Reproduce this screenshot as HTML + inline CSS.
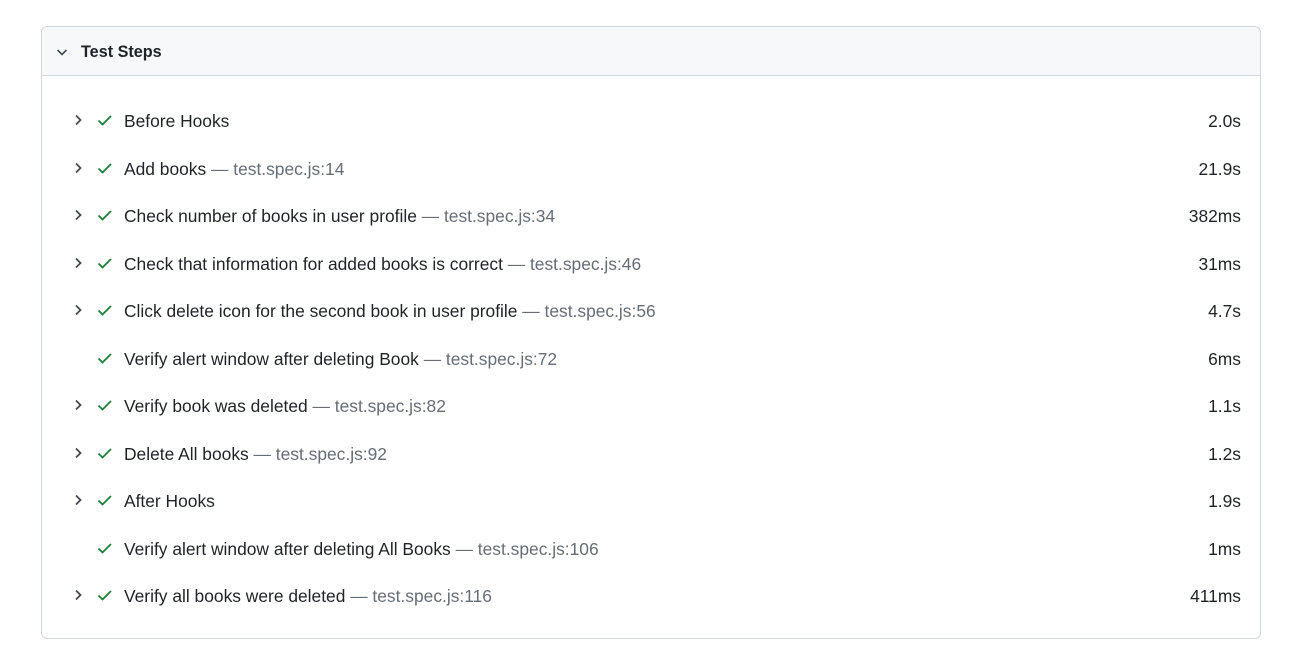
<!DOCTYPE html>
<html><head><style>
body{margin:0;background:#fff;font-family:"Liberation Sans",sans-serif;color:#1f2328;}
.box{position:absolute;left:41px;top:26px;width:1218px;height:611px;border:1px solid #d0d7de;border-radius:6px;overflow:hidden;}
.hd{height:48px;background:#f6f8fa;border-bottom:1px solid #d0d7de;position:relative;}
.hd span{position:absolute;left:39px;top:16px;font-size:16.2px;font-weight:bold;}
.hd svg{position:absolute;left:12px;top:17px;}
.row{position:absolute;left:0;width:1218px;height:24px;font-size:17.4px;}
.row .t{position:absolute;left:82px;top:2px;white-space:nowrap;}
.row .d{position:absolute;right:19px;top:2px;}
.row .c{position:absolute;left:28px;top:3px;}
.row .k{position:absolute;left:54px;top:3px;}
.s{color:#656d76;}
</style></head><body>
<div class="box">
<div class="hd"><svg width="16" height="16" viewBox="0 0 16 16"><path d="M3.5 6l4.5 4.5L12.5 6" fill="none" stroke="#424a53" stroke-width="1.6"/></svg><span>Test Steps</span></div>
</div>
<div id="rows" style="position:absolute;left:42px;top:0;"></div>
<script>
var d=[["Before Hooks","","2.0s",1],["Add books"," — test.spec.js:14","21.9s",1],["Check number of books in user profile"," — test.spec.js:34","382ms",1],["Check that information for added books is correct"," — test.spec.js:46","31ms",1],["Click delete icon for the second book in user profile"," — test.spec.js:56","4.7s",1],["Verify alert window after deleting Book"," — test.spec.js:72","6ms",0],["Verify book was deleted"," — test.spec.js:82","1.1s",1],["Delete All books"," — test.spec.js:92","1.2s",1],["After Hooks","","1.9s",1],["Verify alert window after deleting All Books"," — test.spec.js:106","1ms",0],["Verify all books were deleted"," — test.spec.js:116","411ms",1]];
var h="";d.forEach(function(r,i){var y=109+i*47.5;
h+='<div class="row" style="top:'+y+'px">'+(r[3]?'<svg class="c" width="16" height="16" viewBox="0 0 16 16"><path d="M6 3.5l4.5 4.5L6 12.5" fill="none" stroke="#424a53" stroke-width="1.8"/></svg>':'')+'<svg class="k" width="18" height="16" viewBox="0 0 18 16"><path d="M2.5 8.5l4 4L15 4" fill="none" stroke="#1a7f37" stroke-width="1.8"/></svg><span class="t">'+r[0]+'<span class="s">'+r[1]+'</span></span><span class="d">'+r[2]+'</span></div>';});
document.getElementById("rows").innerHTML=h;
</script>
</body></html>
